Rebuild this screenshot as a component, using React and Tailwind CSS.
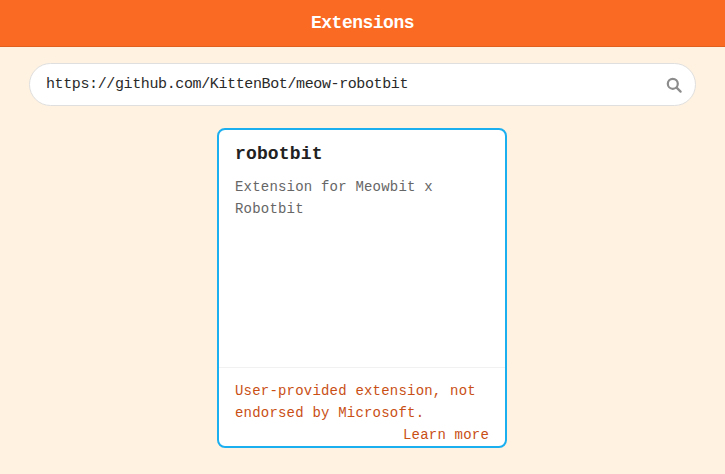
import React from "react";

const mono = "font-['Liberation_Mono','DejaVu_Sans_Mono',monospace]";

export default function App() {
  return (
    <div className={`w-full h-[474px] overflow-hidden flex flex-col bg-[#fff2e0] ${mono}`}>
      <header className="h-[47px] shrink-0 bg-[#fa6a22] border-b border-[#e2601e] flex items-center justify-center text-white font-bold text-[18px] tracking-[-0.5px]">
        Extensions
      </header>
      <div className="px-[29px] pt-[16px]">
        <div className="h-[43px] rounded-full bg-white border border-[#dfdfdf] flex items-center pl-[16px] pr-[13px]">
          <span className="flex-1 pt-[2px] text-[#2a2a2a] text-[15px] tracking-[-0.38px]">https://github.com/KittenBot/meow-robotbit</span>
          <svg width="16" height="16" viewBox="0 0 16 16" fill="none" stroke="#8c8c8c" strokeWidth="2.2" strokeLinecap="round">
            <circle cx="6.8" cy="6.8" r="5" />
            <path d="M10.6 10.6 L14.6 14.6" />
          </svg>
        </div>
      </div>
      <div className="flex justify-center pt-[22px] pr-[1px]">
        <div className="w-[290px] h-[320px] rounded-[8px] border-2 border-[#1caff0] bg-white flex flex-col">
          <div className="flex-1 px-[16px] pt-[12px] border-b border-[#f1f1f1]">
            <div className="text-[#222222] font-bold text-[18px] leading-[24px] tracking-[0.15px]">robotbit</div>
            <div className="mt-[10px] text-[#666666] text-[14px] leading-[22px] tracking-[0.2px]">
              Extension for Meowbit x
              <br />
              Robotbit
            </div>
          </div>
          <div className="h-[78px] shrink-0 px-[16px] pt-[12px] text-[#c94f15] text-[14px] leading-[22px] tracking-[0.2px]">
            <div>User-provided extension, not</div>
            <div>endorsed by Microsoft.</div>
            <div className="text-right">Learn more</div>
          </div>
        </div>
      </div>
    </div>
  );
}
